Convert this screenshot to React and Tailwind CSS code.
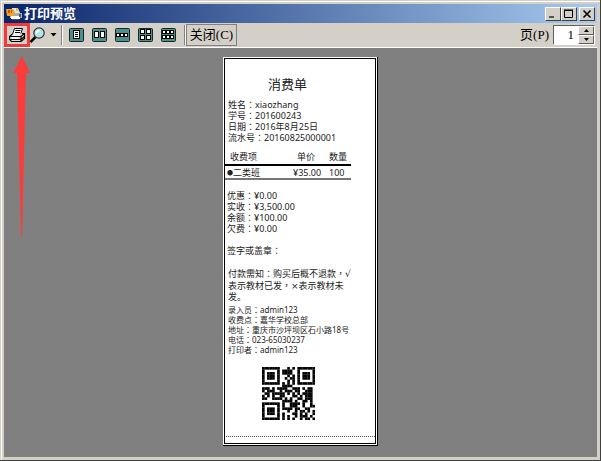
import React, { useState } from "react";

const QR_ROWS = [
  "#######...#.#.#######",
  "#.....#.####..#.....#",
  "#.###.#.####..#.###.#",
  "#.###.#...#.#.#.###.#",
  "#.###.#..#.##.#.###.#",
  "#.....#...#.#.#.....#",
  "#######.#.#.#.#######",
  "........####.........",
  "###.#.####..###.#.##.",
  "#.###..#.###.##..###.",
  ".##.#####.#.#.#.####.",
  "#.#.#..##...##.#.###.",
  "##..####.#.#..##.###.",
  "........####.#..##.#.",
  "#######.#..####.#..#.",
  "#.....#.#..###..#..##",
  "#.###.#.####.##..##..",
  "#.###.#...#..#.##.#.#",
  "#.###.#.#...##.#.#..#",
  "#.....#.#.#..#.###.#.",
  "#######.#.#.#..#.##.#",
];

const VIEWS = [
  { label: "单页", cells: [[5, 3, 5, 8]], lines: true },
  { label: "双页", cells: [[3, 4, 3, 6], [9, 4, 3, 6]] },
  { label: "三页", cells: [[2, 6, 2, 3], [6, 6, 2, 3], [10, 6, 2, 3]] },
  { label: "四页", cells: [[3, 2, 3, 4], [9, 2, 3, 4], [3, 8, 3, 4], [9, 8, 3, 4]] },
  {
    label: "六页",
    cells: [[2, 3, 2, 3], [6, 3, 2, 3], [10, 3, 2, 3], [2, 8, 2, 3], [6, 8, 2, 3], [10, 8, 2, 3]],
  },
];

function AppIcon() {
  return (
    <svg width="16" height="14" viewBox="0 0 16 14" className="shrink-0">
      <path d="M6 1h6l2 5v5H5z" fill="#e4e4e8" />
      <path d="M4 6h12v5H4z" fill="#a8acb4" />
      <path d="M0 2h7l2 3-2 4H1z" fill="#e8a818" />
      <path d="M2 3h2v3H2zM5 3h1v3H5z" fill="#e04818" />
      <path d="M10 1h2v3h-2z" fill="#e8c030" />
      <path d="M5 9h9v3H5z" fill="#fff" />
      <path d="M6 12h7v1H6z" fill="#555" />
      <path d="M13 7h2v3h-2z" fill="#555" />
    </svg>
  );
}

function PrinterIcon() {
  return (
    <svg width="17" height="16" viewBox="0 0 17 16" className="shrink-0">
      <path d="M5.500 1.500H13.500L11.500 7.500H3.500Z" fill="#fff" stroke="#000" />
      <path d="M6.500 3.500h5M6 5.500h5" stroke="#000" />
      <path d="M3.500 7L0.500 9.500V12.500L2.500 14.500H12L15.500 11.500V6.500L13 6.500" fill="#dedbd3" stroke="#000" strokeWidth="1.200" />
      <path d="M4 7.500h8l-1 1H3z" fill="#fff" />
      <path d="M0.500 9.500H12L15.500 6.500M12 9.500V14M1 12.500H12L15.500 9.500" fill="none" stroke="#000" strokeWidth="1.200" />
      <path d="M3 11h6" stroke="#fff" />
    </svg>
  );
}

function ZoomIcon() {
  return (
    <svg width="16" height="16" viewBox="0 0 16 16">
      <path d="M0.500 15L5.500 10" stroke="#000" strokeWidth="2.500" />
      <circle cx="9" cy="6" r="5.200" fill="#b5e2e5" stroke="#333" strokeWidth="1.200" />
      <path d="M6.500 6.500C6.500 4.500 7.500 3.500 9.500 3.500" fill="none" stroke="#fff" strokeWidth="1.400" />
    </svg>
  );
}

function ViewIcon({ cells, lines }) {
  return (
    <svg width="15" height="14" viewBox="0 0 15 14">
      <rect x="0.500" y="0.500" width="14" height="13" rx="1" fill="#4d8f8b" stroke="#12292b" />
      {cells.map(([x, y, w, h]) => (
        <rect key={`${x}-${y}`} x={x - 0.5} y={y - 0.5} width={w + 1} height={h} fill="#fff" stroke="#000" />
      ))}
      {lines && <path d="M6 4.500h3M6 6.500h3M6 8.500h3" stroke="#000" />}
    </svg>
  );
}

function QrCode() {
  return (
    <svg width="53" height="53" viewBox="0 0 21 21" className="block" aria-label="QR">
      {QR_ROWS.map((row, y) =>
        row.split("").map((c, x) => c === "#" && <rect key={`${x}-${y}`} x={x} y={y} width="1.05" height="1.05" />)
      )}
    </svg>
  );
}

function CaptionButton({ label, children }) {
  return (
    <button
      type="button"
      aria-label={label}
      className="flex h-3.5 w-4 items-center justify-center border border-t-white border-l-white border-r-[#404040] border-b-[#404040] bg-[#d4d0c8]"
    >
      <svg width="10" height="10" viewBox="0 0 10 10">
        {children}
      </svg>
    </button>
  );
}

function Separator() {
  return <div className="h-5 w-0.5 shrink-0 border-l border-r border-l-[#808080] border-r-white" />;
}

// full-width colons and commas sit in the middle of their cell
function Line({ text }) {
  return (
    <p>
      {text.split(/([：，])/).map((part, i) =>
        part === "：" || part === "，" ? (
          <span key={i} lang="zh-TW" className="font-['Noto_Sans_CJK_TC',sans-serif]">
            {part}
          </span>
        ) : (
          part
        )
      )}
    </p>
  );
}

function Receipt() {
  return (
    <div className="w-[155px] self-start border-r border-b border-black">
      <div className="border border-white bg-black p-px">
        <div className="bg-white pb-1.5 font-['Noto_Sans','Noto_Sans_CJK_SC',sans-serif] text-[9px] leading-[11px] text-[#222]">
          <h1 className="pt-[15px] pl-[43px] text-[13px] leading-5">消费单</h1>
          <div className="pt-[5px] pl-[3px] whitespace-nowrap">
            <Line text="姓名：xiaozhang" />
            <Line text="学号：201600243" />
            <Line text="日期：2016年8月25日" />
            <Line text="流水号：20160825000001" />
          </div>
          <table className="mt-1.5 w-[126px] table-fixed border-collapse text-left whitespace-nowrap">
            <thead>
              <tr className="h-4 border-b-2 border-black">
                <th className="w-[68px] p-0 pl-[5px] font-normal">收费项</th>
                <th className="p-0 pl-1 font-normal">单价</th>
                <th className="w-[22px] p-0 font-normal">数量</th>
              </tr>
            </thead>
            <tbody>
              <tr className="h-3.5 border-b-2 border-[#777]">
                <td className="p-0 pl-0.5">
                  <span className="align-[1px] text-[6px] leading-none">●</span>二类班
                </td>
                <td className="p-0">¥35.00</td>
                <td className="p-0">100</td>
              </tr>
            </tbody>
          </table>
          <div className="mt-2.5 pl-0.5">
            <Line text="优惠：¥0.00" />
            <Line text="实收：¥3,500.00" />
            <Line text="余额：¥100.00" />
            <Line text="欠费：¥0.00" />
          </div>
          <div className="mt-[11px] pl-0.5">
            <Line text="签字或盖章：" />
          </div>
          <div className="mt-3 pl-[3px] font-['DejaVu_Sans','Noto_Sans_CJK_SC',sans-serif] whitespace-nowrap">
            <Line text="付款需知：购买后概不退款，√" />
            <Line text="表示教材已发，×表示教材未" />
            <Line text="发。" />
          </div>
          <div className="mt-0.5 pl-[3px] text-[8px] leading-[10px] whitespace-nowrap">
            <Line text="录入员：admin123" />
            <Line text="收费点：嘉华学校总部" />
            <Line text="地址：重庆市沙坪坝区石小路18号" />
            <Line text="电话：023-65030237" />
            <Line text="打印者：admin123" />
          </div>
          <div className="mt-3 pl-[37px]">
            <QrCode />
          </div>
          <div className="mt-4 ml-px border-t border-dotted border-[#555]" />
        </div>
      </div>
    </div>
  );
}

export default function App() {
  const [page, setPage] = useState("1");

  return (
    <div className="relative flex h-screen flex-col border-r border-b border-[#404040] bg-[#d4d0c8] font-['Liberation_Serif','Noto_Sans_CJK_SC',serif] text-[13px] text-black">
      <div className="flex min-h-0 flex-1 flex-col border-t border-l border-[#d4d0c8] p-[3px] shadow-[inset_1px_1px_0_#fff]">
        <header className="flex h-[19px] shrink-0 items-center gap-0.5 bg-linear-to-r/srgb from-[#0a246a] to-[#a6caf0] pr-0.5 pl-0.5">
          <AppIcon />
          <span className="flex-1 leading-4 font-bold text-white">打印预览</span>
          <div className="flex">
            <CaptionButton label="最小化">
              <path d="M1 8h5" stroke="#555" strokeWidth="2" />
            </CaptionButton>
            <CaptionButton label="最大化">
              <path d="M0.500 1.500h8v7h-8zM0 1h9" fill="none" stroke="#000" />
            </CaptionButton>
          </div>
          <CaptionButton label="关闭窗口">
            <path d="M1.500 1.500L8.500 8.500M8.500 1.500L1.500 8.500" stroke="#000" strokeWidth="1.600" />
          </CaptionButton>
        </header>

        <div className="flex h-[25px] shrink-0 items-center border-b border-white">
          <button
            type="button"
            aria-label="打印"
            className="flex h-6 w-[26px] items-center justify-center border-3 border-[#f23a3a]"
          >
            <PrinterIcon />
          </button>
          <button type="button" aria-label="缩放" className="flex items-center gap-1">
            <ZoomIcon />
            <svg width="7" height="4" viewBox="0 0 7 4">
              <path d="M0.500 0h6L3.500 3.500z" />
            </svg>
          </button>
          <div className="ml-1 flex flex-1 items-center gap-2">
            <div className="-mr-0.5">
              <Separator />
            </div>
            {VIEWS.map((v) => (
              <button key={v.label} type="button" aria-label={v.label}>
                <ViewIcon cells={v.cells} lines={v.lines} />
              </button>
            ))}
            <div className="flex items-center">
              <Separator />
              <button type="button" className="h-[22px] w-[51px] border border-[#808080] leading-5 whitespace-nowrap">
                关闭(C)
              </button>
            </div>
          </div>
          <label htmlFor="page" className="pr-1">
            页(P)
          </label>
          <div className="mr-0.5 flex h-5 w-[42px] border border-t-[#606060] border-l-[#606060] border-r-white border-b-white bg-white">
            <input
              id="page"
              value={page}
              onChange={(e) => setPage(e.target.value)}
              className="w-6 min-w-0 pr-1 text-right outline-none"
            />
            <div className="flex flex-1 flex-col">
              <button
                type="button"
                aria-label="下一页"
                onClick={() => setPage(String(Number(page) + 1))}
                className="flex flex-1 items-center justify-center border border-t-white border-l-white border-r-[#606060] border-b-[#606060] bg-[#d4d0c8]"
              >
                <svg width="5" height="3" viewBox="0 0 5 3">
                  <path d="M0 3h5L2.500 0z" />
                </svg>
              </button>
              <button
                type="button"
                aria-label="上一页"
                onClick={() => setPage(String(Math.max(1, Number(page) - 1)))}
                className="flex flex-1 items-center justify-center border border-t-white border-l-white border-r-[#606060] border-b-[#606060] bg-[#d4d0c8]"
              >
                <svg width="5" height="3" viewBox="0 0 5 3">
                  <path d="M0 0h5L2.500 3z" />
                </svg>
              </button>
            </div>
          </div>
        </div>

        <main className="flex min-h-0 flex-1 justify-center overflow-hidden bg-[#808080] pt-[9px]">
          <Receipt />
        </main>
      </div>

      {/* arrow pointing at the print button */}
      <svg className="pointer-events-none absolute top-14 left-3" width="19" height="182" viewBox="0 0 19 182">
        <path d="M10 0L18 17H14L10 181H9L5 17H1Z" fill="#fa3c3c" />
      </svg>
    </div>
  );
}
